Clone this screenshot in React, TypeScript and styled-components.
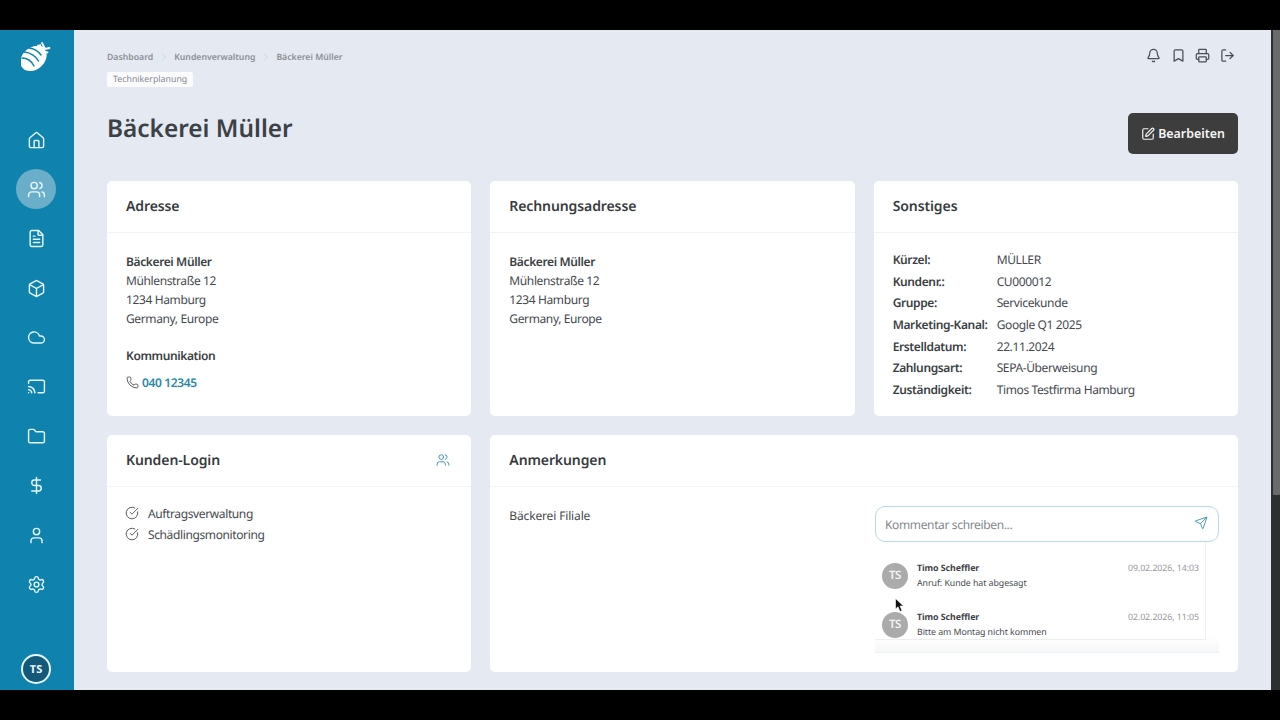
import React from "react";
import styled, { createGlobalStyle } from "styled-components";
import { Home, Users, FileText, Box, Cloud, Cast, Folder, DollarSign, User, Settings, Bell, Bookmark, Printer, LogOut, SquarePen, Phone, CircleCheckBig, Send, ChevronRight } from "lucide-react";

const Global = createGlobalStyle`
  html, body { margin: 0; padding: 0; background: #000; overflow: hidden; }
  * { box-sizing: border-box; }
  body { font-family: "Noto Sans", "Open Sans", sans-serif; color: #3b4045; text-rendering: geometricPrecision; }
`;
const Stage = styled.div`
  width: 1280px; height: 720px; padding: 30px 0; background: #000;
`;
const Frame = styled.div`
  height: 660px; display: flex; background: #e5e9f1; overflow: hidden;
`;
const Sidebar = styled.nav`
  width: 74px; flex: none; background: #0f83ad; display: flex; flex-direction: column; align-items: center; padding: 11px 2px 0 0;
`;
const Logo = styled.svg`
  width: 30px; height: 32px;
`;
const NavList = styled.div`
  margin-top: 47px; display: flex; flex-direction: column; gap: 9.38px;
`;
const NavItem = styled.div<{ $active?: boolean }>`
  width: 40px; height: 40px; border-radius: 50%; display: flex; align-items: center; justify-content: center;
  color: #e6f6fb; background: ${p => (p.$active ? "#6aaec9" : "transparent")};
`;
const UserBadge = styled.div`
  margin-top: auto; margin-bottom: 6px; width: 30px; height: 30px; border-radius: 50%; border: 2px solid #e6f6fb;
  background: #14597a; color: #eef7fa; font-size: 11px; font-weight: 700; display: flex; align-items: center; justify-content: center;
`;
const Main = styled.main`
  flex: 1; min-width: 0; padding: 20px 33px 0 33px; display: flex; flex-direction: column;
`;
const TopRow = styled.div`
  display: flex; justify-content: space-between; align-items: flex-start; height: 40px;
`;
const Crumbs = styled.div`
  display: flex; align-items: center; height: 14px; font-size: 8.7px; font-weight: 600; color: #8b9096;
`;
const CrumbSep = styled.span`
  display: inline-flex; width: 21px; justify-content: center; color: #cfd3d9;
`;
const Tag = styled.div`
  display: block; width: fit-content; margin-top: 8px; padding: 0 6px; height: 15px; line-height: 15px; background: #fbfbfc; border-radius: 2px; font-size: 8.8px; color: #83888e;
`;
const TopIcons = styled.div`
  display: flex; gap: 9.6px; color: #4b4f54; margin: -2px 3px 0 0;
`;
const TitleRow = styled.div`
  display: flex; justify-content: space-between; align-items: flex-start; height: 91px; padding-top: 23px;
`;
const Title = styled.h1`
  margin: 0; font-size: 24.4px; line-height: 32px; font-weight: 600; color: #3c4146;
`;
const EditButton = styled.button`
  width: 110px; height: 41px; border: 0; border-radius: 5px; background: #3d3d3d; color: #f5f5f5; display: flex; align-items: center; justify-content: center; gap: 3px;
  font: 600 12.4px "Noto Sans", sans-serif;
`;
const Grid = styled.div`
  display: grid; grid-template-columns: repeat(3, 1fr); grid-template-rows: 235px 237px; gap: 19px;
`;
const Card = styled.section<{ $wide?: boolean }>`
  background: #fff; border-radius: 5px; display: flex; flex-direction: column; grid-column: ${p => (p.$wide ? "span 2" : "auto")}; min-width: 0;
`;
const CardHead = styled.div`
  flex: none; height: 51.5px; padding: 1px 21px 0 19px; display: flex; align-items: center; justify-content: space-between; border-bottom: 1px solid #f2f3f5;
  font-size: 14px; font-weight: 600; color: #383c40; letter-spacing: -0.1px;
`;
const CardBody = styled.div`
  padding: 19.5px 19px; font-size: 12px; line-height: 19.1px; color: #45494e; position: relative; flex: 1; min-height: 0; letter-spacing: -0.38px;
`;
const Strong = styled.div`
  font-weight: 600; color: #3b3f44;
`;
const SubHead = styled(Strong)`
  margin-top: 17.5px;
`;
const PhoneRow = styled.div`
  margin-top: 8.4px; display: flex; align-items: center; gap: 3px;
`;
const PhoneLink = styled.span`
  color: #2b87a8; font-weight: 600;
`;
const Facts = styled.div`
  display: grid; grid-template-columns: 104px 1fr; row-gap: 2.55px; margin-top: -2px;
`;
const LoginIcon = styled(Users)`
  margin-top: -2px; color: #3d8fae;
`;
const CheckList = styled.div`
  display: flex; flex-direction: column; gap: 2.3px; margin-top: -2px;
`;
const CheckRow = styled.div`
  display: flex; align-items: center; gap: 9px;
`;
const CheckIcon = styled(CircleCheckBig)`
  margin: -2px 0 0 -1px;
`;
const NotesBody = styled(CardBody)`
  padding: 18.5px 19px 0 19px; display: flex; justify-content: space-between;
`;
const NoteText = styled.div`
  padding-top: 1px; letter-spacing: -0.15px;
`;
const Comments = styled.div`
  width: 344px; display: flex; flex-direction: column;
`;
const CommentInput = styled.div`
  height: 36px; margin-top: 1px; border: 1px solid #b9dbe6; border-radius: 10px; background: #fff; display: flex; align-items: center; justify-content: space-between; padding: 1px 10px 0 9px;
  color: #83888d; font-size: 12px; position: relative; z-index: 1; letter-spacing: -0.36px;
`;
const SendIcon = styled(Send)`
  margin-top: -3px; color: #3d8fae;
`;
const CommentTray = styled.div`
  height: 111px; background: linear-gradient(#fff 85%, #f6f7f8); border-bottom: 1px solid #eff0f2; position: relative;
`;
const CommentList = styled.div`
  width: 331px; height: 98px; background: #fff; border-right: 1px solid #f0f1f3; border-bottom: 1px solid #eceef0; padding: 19px 6px 0 7px; overflow: hidden;
`;
const Comment = styled.div`
  display: flex; gap: 9px; height: 49px;
`;
const Avatar = styled.div`
  width: 26px; height: 26px; flex: none; border-radius: 50%; background: #ababab; color: #f4f4f4; font-size: 11.5px; font-weight: 600; display: flex; align-items: center; justify-content: center; margin-top: 2px;
`;
const CommentMain = styled.div`
  flex: 1; min-width: 0; font-size: 8.8px; line-height: 15px; letter-spacing: -0.06px;
`;
const CommentTop = styled.div`
  display: flex; justify-content: space-between;
`;
const CommentAuthor = styled.span`
  font-weight: 700; color: #3e4246;
`;
const CommentDate = styled.span`
  color: #94989c;
`;
const Cursor = styled.svg`
  position: absolute; left: 20px; top: 56px; width: 10px; height: 15px;
`;
const ScrollTrack = styled.div`
  width: 9px; flex: none; background: #2c302f; padding-left: 2px;
`;
const ScrollThumb = styled.div`
  height: 465px; background: #6a6c6c; border-radius: 0 0 1px 1px;
`;

const nav = [Home, Users, FileText, Box, Cloud, Cast, Folder, DollarSign, User, Settings];
const facts: [string, string][] = [
  ["Kürzel:", "MÜLLER"], ["Kundenr.:", "CU000012"], ["Gruppe:", "Servicekunde"], ["Marketing-Kanal:", "Google Q1 2025"],
  ["Erstelldatum:", "22.11.2024"], ["Zahlungsart:", "SEPA-Überweisung"], ["Zuständigkeit:", "Timos Testfirma Hamburg"],
];
const Address = () => (
  <>
    <Strong>Bäckerei Müller</Strong>
    <div>Mühlenstraße 12</div>
    <div>1234 Hamburg</div>
    <div>Germany, Europe</div>
  </>
);

export default function App() {
  return (
    <Stage>
      <Global />
      <Frame>
        <Sidebar>
          <Logo viewBox="0 0 30 32">
            <ellipse cx="12.5" cy="17.5" rx="11" ry="14.5" transform="rotate(50 12.5 17.5)" fill="#fff" />
            <path d="M19 4 C20 8 22 11 26.5 11.5 M17 4.5 L24 8 M21 2 L24 8 L28.5 7" fill="none" stroke="#fff" strokeWidth="1.8" strokeLinecap="round" />
            <g fill="none" stroke="#0f83ad" strokeWidth="1.5" strokeLinecap="round">
              <path d="M8 7 C12 7.5 17 10 20 14" />
              <path d="M3.5 11 C9 11.5 15 15 17.5 20" />
              <path d="M1 17 C6 17 10.5 20 13 25" />
            </g>
          </Logo>
          <NavList>
            {nav.map((I, i) => (
              <NavItem key={i} $active={i === 1}><I size={19} strokeWidth={1.8} /></NavItem>
            ))}
          </NavList>
          <UserBadge>TS</UserBadge>
        </Sidebar>
        <Main>
          <TopRow>
            <div>
              <Crumbs>
                Dashboard<CrumbSep><ChevronRight size={12} /></CrumbSep>Kundenverwaltung<CrumbSep><ChevronRight size={12} /></CrumbSep>Bäckerei Müller
              </Crumbs>
              <Tag>Technikerplanung</Tag>
            </div>
            <TopIcons>
              <Bell size={15} /><Bookmark size={15} /><Printer size={15} /><LogOut size={15} />
            </TopIcons>
          </TopRow>
          <TitleRow>
            <Title>Bäckerei Müller</Title>
            <EditButton><SquarePen size={14} />Bearbeiten</EditButton>
          </TitleRow>
          <Grid>
            <Card>
              <CardHead>Adresse</CardHead>
              <CardBody>
                <Address />
                <SubHead>Kommunikation</SubHead>
                <PhoneRow><Phone size={13} strokeWidth={1.6} /><PhoneLink>040 12345</PhoneLink></PhoneRow>
              </CardBody>
            </Card>
            <Card>
              <CardHead>Rechnungsadresse</CardHead>
              <CardBody><Address /></CardBody>
            </Card>
            <Card>
              <CardHead>Sonstiges</CardHead>
              <CardBody>
                <Facts>
                  {facts.map(([k, v]) => (
                    <React.Fragment key={k}><Strong>{k}</Strong><div>{v}</div></React.Fragment>
                  ))}
                </Facts>
              </CardBody>
            </Card>
            <Card>
              <CardHead>Kunden-Login<LoginIcon size={14} strokeWidth={1.6} /></CardHead>
              <CardBody>
                <CheckList>
                  <CheckRow><CheckIcon size={14} strokeWidth={1.5} />Auftragsverwaltung</CheckRow>
                  <CheckRow><CheckIcon size={14} strokeWidth={1.5} />Schädlingsmonitoring</CheckRow>
                </CheckList>
              </CardBody>
            </Card>
            <Card $wide>
              <CardHead>Anmerkungen</CardHead>
              <NotesBody>
                <NoteText>Bäckerei Filiale</NoteText>
                <Comments>
                  <CommentInput>Kommentar schreiben...<SendIcon size={14} strokeWidth={1.5} /></CommentInput>
                  <CommentTray>
                    <CommentList>
                      <Comment>
                        <Avatar>TS</Avatar>
                        <CommentMain>
                          <CommentTop><CommentAuthor>Timo Scheffler</CommentAuthor><CommentDate>09.02.2026, 14:03</CommentDate></CommentTop>
                          Anruf: Kunde hat abgesagt
                        </CommentMain>
                      </Comment>
                      <Comment>
                        <Avatar>TS</Avatar>
                        <CommentMain>
                          <CommentTop><CommentAuthor>Timo Scheffler</CommentAuthor><CommentDate>02.02.2026, 11:05</CommentDate></CommentTop>
                          Bitte am Montag nicht kommen
                        </CommentMain>
                      </Comment>
                    </CommentList>
                    <Cursor viewBox="0 0 10 15"><path d="M0.5 0.5 L0.5 11 L3 8.8 L5 13.5 L7 12.6 L5 8 L8.5 8 Z" fill="#111" stroke="#fff" strokeWidth="0.6" /></Cursor>
                  </CommentTray>
                </Comments>
              </NotesBody>
            </Card>
          </Grid>
        </Main>
        <ScrollTrack><ScrollThumb /></ScrollTrack>
      </Frame>
    </Stage>
  );
}
